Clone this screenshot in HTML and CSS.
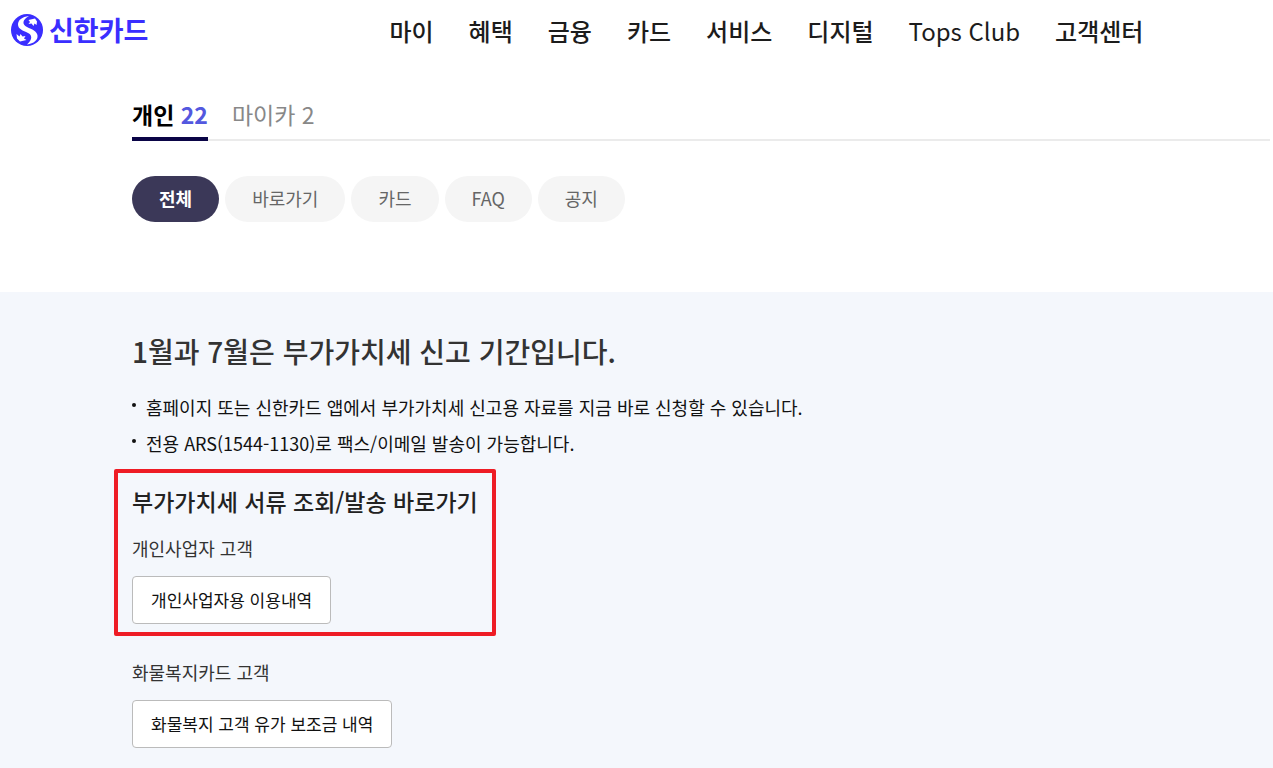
FILE: index.html
```html
<!DOCTYPE html>
<html lang="ko">
    <head>
        <meta charset="utf-8">
        <meta name="viewport" content="width=device-width, initial-scale=1">
        <title>신한카드</title>
        <link rel="stylesheet" href="styles.css">
    </head>
    <body>
        <header class="header">
            <a class="logo" href="#">
                <svg class="logo-mark" viewBox="0 0 32 32" aria-hidden="true">
                    <circle cx="16" cy="16" r="16" fill="#3a2eff"/>
                    <path d="M18 2C11 3 7 6 7 10.500C7 15 12 16.500 17 19C21 21 22 25 16 30.500C23 29.500 27 26 26.500 21.500C26 17 21 15.500 16 13C11 10.500 11 6 18 2Z" fill="#fff"/>
                    <path d="M17.500 6L24 4.500L26 7.500L25.500 11L23.500 9.500L22.500 12L20.500 9.500L17.500 10L19 8Z" fill="#fff"/>
                    <path d="M5.500 20L8.500 22.500L9.500 20L11.500 22.500L14.500 22L13 24.500L15.500 26L9 27.500L6 24.500Z" fill="#fff"/>
                </svg>
                <span>신한카드</span>
            </a>
            <nav class="gnb">
                <a href="#">마이</a>
                <a href="#">혜택</a>
                <a href="#">금융</a>
                <a href="#">카드</a>
                <a href="#">서비스</a>
                <a href="#">디지털</a>
                <a class="latin" href="#">Tops Club</a>
                <a href="#">고객센터</a>
            </nav>
        </header>

        <main>
            <div class="search-result">
                <div class="tabs">
                    <button type="button" class="tab active">개인 <span class="count">22</span></button>
                    <button type="button" class="tab">마이카 2</button>
                </div>
                <div class="filters">
                    <button type="button" class="filter active">전체</button>
                    <button type="button" class="filter">바로가기</button>
                    <button type="button" class="filter">카드</button>
                    <button type="button" class="filter">FAQ</button>
                    <button type="button" class="filter">공지</button>
                </div>
            </div>

            <section class="notice">
                <h2>1월과 7월은 부가가치세 신고 기간입니다.</h2>
                <ul class="notice-list">
                    <li>홈페이지 또는 신한카드 앱에서 부가가치세 신고용 자료를 지금 바로 신청할 수 있습니다.</li>
                    <li>전용 ARS(1544-1130)로 팩스/이메일 발송이 가능합니다.</li>
                </ul>
                <div class="group highlight">
                    <h3>부가가치세 서류 조회/발송 바로가기</h3>
                    <p>개인사업자 고객</p>
                    <a class="link-btn" href="#">개인사업자용 이용내역</a>
                </div>
                <div class="group">
                    <p>화물복지카드 고객</p>
                    <a class="link-btn" href="#">화물복지 고객 유가 보조금 내역</a>
                </div>
            </section>
        </main>
    </body>
</html>
```
FILE: styles.css
```css
* {
    box-sizing: border-box;
}

body {
    margin: 0;
    font-family: "Noto Sans CJK KR", sans-serif;
    font-size: 18px;
    line-height: 28px;
    color: #111;
    background-color: #fff;
    min-height: 100vh;
    display: flex;
    flex-direction: column;
}

a {
    color: inherit;
    text-decoration: none;
}

button {
    font-family: inherit;
    border: none;
    background: none;
    cursor: pointer;
}

h2, h3, p, ul {
    margin: 0;
    padding: 0;
}

main {
    flex: 1;
    display: flex;
    flex-direction: column;
}

/* Header */
.header {
    display: flex;
    align-items: center;
    gap: 241px;
    height: 62px;
    padding-left: 11px;
}

.logo {
    display: flex;
    align-items: center;
    gap: 6px;
    font-size: 27px;
    font-weight: bold;
    color: #3a2eff;
    white-space: nowrap;
    padding-bottom: 3px;
}

.logo-mark {
    width: 32px;
    height: 32px;
}

.gnb {
    display: flex;
    gap: 35px;
    font-size: 24px;
    font-weight: 500;
    color: #1c1c1c;
    white-space: nowrap;
}

.gnb .latin {
    font-weight: normal;
}

/* Tabs and filters */
.search-result {
    padding: 31px 3px 70px 132px;
}

.tabs {
    display: flex;
    gap: 24px;
    border-bottom: 2px solid #ebebeb;
}

.tab {
    font-size: 23px;
    line-height: 42px;
    padding: 0 0 2px;
    color: #888;
    margin-bottom: -2px;
    border-bottom: 4px solid transparent;
}

.tab.active {
    font-weight: bold;
    color: #000;
    border-bottom-color: #0a0446;
}

.count {
    color: #5358df;
}

.filters {
    display: flex;
    flex-wrap: wrap;
    gap: 6px;
    margin-top: 35px;
}

.filter {
    height: 46px;
    padding: 0 27px 3px;
    border-radius: 23px;
    font-size: 18px;
    color: #666;
    background-color: #f5f5f5;
}

.filter.active {
    font-weight: bold;
    color: #fff;
    background-color: #3b3858;
}

/* Notice */
.notice {
    flex: 1;
    padding: 39px 24px 20px 132px;
    background-color: #f4f7fc;
}

.notice h2 {
    font-size: 28px;
    font-weight: 500;
    line-height: 40px;
    color: #333;
}

.notice-list {
    list-style: none;
    margin: 18px 0 8px;
}

.notice-list li {
    display: flex;
    gap: 10px;
    line-height: 36px;
}

.notice-list li::before {
    content: "";
    flex: none;
    width: 4px;
    height: 4px;
    margin-top: 14px;
    border-radius: 50%;
    background-color: #111;
}

.group h3 {
    font-size: 23px;
    font-weight: 500;
    line-height: 32px;
    color: #222;
    margin-bottom: 17px;
}

.group p {
    color: #333;
    margin-bottom: 14px;
}

/* pulled left so that its text lines up with the rest */
.group.highlight {
    width: fit-content;
    margin-left: -18px;
    margin-bottom: 22px;
    padding: 12px 14px 8px;
    border: 4px solid #ee1c25;
    border-radius: 2px;
}

.link-btn {
    display: block;
    width: fit-content;
    padding: 0 18px;
    border: 1px solid #bbb;
    border-radius: 4px;
    background-color: #fff;
    font-size: 17px;
    line-height: 46px;
}
```
